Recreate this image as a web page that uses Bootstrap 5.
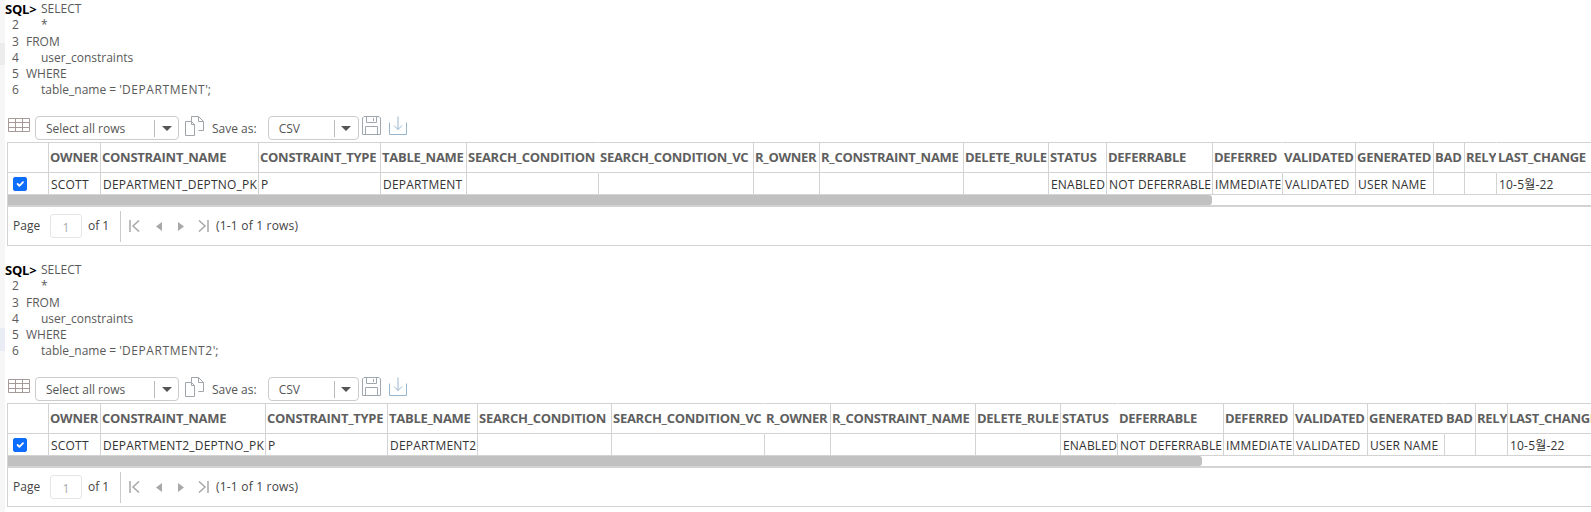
<!doctype html>
<html lang="ko">
<head>
<meta charset="utf-8">
<title>SQL constraints</title>
<link href="https://cdn.jsdelivr.net/npm/bootstrap@5.3.0/dist/css/bootstrap.min.css" rel="stylesheet">
<style>
html,body{height:512px;overflow:hidden;background:#fff}
body{font-family:"Open Sans","Noto Sans CJK KR",sans-serif;font-size:12px;color:#333}
.side-rail{flex:0 0 5px;background:#f6f6f6;height:512px}
.rail-mark{height:22px;background:#ececec;margin-top:43px}
.rail-mark-b{height:23px;background:#e9ebf5;margin-top:263px}
.sheet{flex:1 1 auto;min-width:0}
.result-block{height:261px}
.sql-lines{height:98px;padding-top:1px;line-height:16.3px;color:#5a5a5a}
.sql-row{display:flex;white-space:nowrap}
.sql-prompt{font-weight:700;color:#000;width:36px;font-size:13px;letter-spacing:-.2px}
.sql-num{width:21px;padding-left:7px}
.sql-ind{padding-left:15px}
.sql-caps{letter-spacing:.6px}
.tool-row{height:26px;margin-top:18px;padding-left:3px;color:#555}
.grid-ico{margin:2px 5px 0 0;display:block}
.drop-box{height:24px;border:1px solid #ccc;border-radius:4px;align-items:center;padding:1px 0 0 10px;color:#555}
.drop-a{width:144px}
.drop-b{width:91px}
.drop-sep{height:17px;border-left:1px solid #bbb;margin-left:auto;width:24px;display:flex;align-items:center;justify-content:center}
.drop-arrow{width:0;height:0;border-left:5px solid transparent;border-right:5px solid transparent;border-top:5px solid #555}
.copy-ico{margin:0 7px 0 6px;display:block}
.save-lbl{margin-right:11px;line-height:26px}
.save-ico{margin:0 5px 0 3px;display:block}
.grid-frame{margin-left:2px;width:1600px;border-left:1px solid #d3d3d3}
.grid-table{table-layout:fixed;border-collapse:separate;border-spacing:0;width:1600px;margin:0}
.grid-table th,.grid-table td{border:0;border-right:1px solid #d3d3d3;border-bottom:1px solid #d3d3d3;padding:0 2px;white-space:nowrap;overflow:hidden;background:#fff;vertical-align:middle;box-shadow:none}
.grid-table th{height:31px;padding-left:1px;padding-right:0;border-top:1px solid #d3d3d3;font-weight:700;font-size:13px;letter-spacing:-.27px;color:#5f5f5f}
.grid-table td{height:22px;padding-top:2px;color:#333;letter-spacing:.2px}
.grid-table th.no-rule{border-right-color:transparent}
.grid-table .check-cell{padding-left:5px;padding-top:0}
.grid-table .form-check-input{width:14px;height:14px;margin:1px 0 0;display:block;border-radius:2px;float:none}
.grid-one col:nth-child(1){width:41px}.grid-one col:nth-child(2){width:52px}.grid-one col:nth-child(3){width:158px}.grid-one col:nth-child(4){width:122px}.grid-one col:nth-child(5){width:86px}.grid-one col:nth-child(6){width:132px}.grid-one col:nth-child(7){width:155px}.grid-one col:nth-child(8){width:66px}.grid-one col:nth-child(9){width:144px}.grid-one col:nth-child(10){width:85px}.grid-one col:nth-child(11){width:58px}.grid-one col:nth-child(12){width:106px}.grid-one col:nth-child(13){width:70px}.grid-one col:nth-child(14){width:73px}.grid-one col:nth-child(15){width:78px}.grid-one col:nth-child(16){width:31px}.grid-one col:nth-child(17){width:32px}
.grid-two col:nth-child(1){width:41px}.grid-two col:nth-child(2){width:52px}.grid-two col:nth-child(3){width:165px}.grid-two col:nth-child(4){width:122px}.grid-two col:nth-child(5){width:90px}.grid-two col:nth-child(6){width:134px}.grid-two col:nth-child(7){width:153px}.grid-two col:nth-child(8){width:66px}.grid-two col:nth-child(9){width:145px}.grid-two col:nth-child(10){width:85px}.grid-two col:nth-child(11){width:57px}.grid-two col:nth-child(12){width:106px}.grid-two col:nth-child(13){width:70px}.grid-two col:nth-child(14){width:74px}.grid-two col:nth-child(15){width:77px}.grid-two col:nth-child(16){width:31px}.grid-two col:nth-child(17){width:32px}
.scroll-track{height:12px;border-bottom:2px solid #d3d3d3}
.scroll-thumb{height:10px;background:#c1c1c1;border-radius:0 3px 3px 0}
.thumb-one{width:1204px}
.thumb-two{width:1194px}
.pager-bar{height:39px;border-bottom:1px solid #d3d3d3;padding-left:5px;color:#444}
.page-lbl{width:37px}
.page-input{width:32px;height:24px;border:1px solid #e6e6e6;border-radius:3px;text-align:center;color:#aaa;line-height:26px;margin-right:6px}
.page-of{width:32px}
.pager-sep{height:31px;border-left:1px solid #ccc;margin-right:8px}
.pg-ico{display:block}
.pg-first{margin-right:16px}
.pg-prev{margin-right:16px}
.pg-next{margin-right:14px}
.pg-last{margin-right:7px}
.pg-count{letter-spacing:.2px}
</style>
</head>
<body class="d-flex">
<div class="side-rail"><div class="rail-mark"></div><div class="rail-mark-b"></div></div>
<main class="sheet">

<section class="result-block">
  <div class="sql-lines">
    <div class="sql-row"><span class="sql-prompt">SQL&gt;</span><span>SELECT</span></div>
    <div class="sql-row"><span class="sql-num">2</span><span class="sql-ind">*</span></div>
    <div class="sql-row"><span class="sql-num">3</span><span>FROM</span></div>
    <div class="sql-row"><span class="sql-num">4</span><span class="sql-ind">user_constraints</span></div>
    <div class="sql-row"><span class="sql-num">5</span><span>WHERE</span></div>
    <div class="sql-row"><span class="sql-num">6</span><span class="sql-ind">table_name = '<span class="sql-caps">DEPARTMENT</span>';</span></div>
  </div>
  <div class="tool-row d-flex align-items-start">
    <svg class="grid-ico" width="22" height="14" viewBox="0 0 22 14" fill="none" stroke="#a59a98"><path d="M.5.5h21v13H.5zM.5 4.500h21M.5 9.500h21M7.500.5v13M14.500.5v13"/></svg>
    <div class="drop-box drop-a d-flex">Select all rows<span class="drop-sep"><span class="drop-arrow"></span></span></div>
    <svg class="copy-ico" width="20" height="20" viewBox="0 0 20 20" fill="none" stroke="#9fa5aa"><path d="M.5 5.500h6l3 3v11H.5zM6.500 5.500v3h3M6.500 5V.5h7l5 5v9h-5M13.500.5v5h5"/></svg>
    <span class="save-lbl">Save as:</span>
    <div class="drop-box drop-b d-flex">CSV<span class="drop-sep"><span class="drop-arrow"></span></span></div>
    <svg class="save-ico" width="19" height="19" viewBox="0 0 19 19" fill="none" stroke="#9fa8b0"><path d="M2 .5h15l1.500 1.500v16.500H.5V2zM4.500.5v6h10v-6M11.500 2v3M3.500 18.500v-8h12v8"/></svg>
    <svg class="save-ico" width="18" height="19" viewBox="0 0 18 19" fill="none" stroke="#98b6ce"><path d="M.5 6.500v12h17v-12M9 .5v13M5 9.500l4 4 4-4"/></svg>
  </div>
  <div class="grid-frame">
    <table class="table grid-table grid-one">
      <colgroup><col><col><col><col><col><col><col><col><col><col><col><col><col><col><col><col><col><col></colgroup>
      <thead><tr><th></th><th>OWNER</th><th>CONSTRAINT_NAME</th><th>CONSTRAINT_TYPE</th><th>TABLE_NAME</th><th class="no-rule">SEARCH_CONDITION</th><th>SEARCH_CONDITION_VC</th><th>R_OWNER</th><th>R_CONSTRAINT_NAME</th><th>DELETE_RULE</th><th>STATUS</th><th>DEFERRABLE</th><th class="no-rule">DEFERRED</th><th>VALIDATED</th><th>GENERATED</th><th>BAD</th><th class="no-rule">RELY</th><th>LAST_CHANGE</th></tr></thead>
      <tbody><tr><td class="check-cell"><input class="form-check-input" type="checkbox" checked aria-label="row 1"></td><td>SCOTT</td><td>DEPARTMENT_DEPTNO_PK</td><td>P</td><td>DEPARTMENT</td><td></td><td></td><td></td><td></td><td></td><td>ENABLED</td><td>NOT DEFERRABLE</td><td>IMMEDIATE</td><td>VALIDATED</td><td>USER NAME</td><td></td><td></td><td>10-5월-22</td></tr></tbody>
    </table>
    <div class="scroll-track"><div class="scroll-thumb thumb-one"></div></div>
    <div class="pager-bar d-flex align-items-center">
      <span class="page-lbl">Page</span><span class="page-input">1</span><span class="page-of">of 1</span><span class="pager-sep"></span>
      <svg class="pg-ico pg-first" width="11" height="12" viewBox="0 0 11 12" fill="none" stroke="#a8a8a8" stroke-width="1.500"><path d="M1 0v12M10 .5 4 6l6 5.500"/></svg>
      <svg class="pg-ico pg-prev" width="6" height="9" viewBox="0 0 6 9" fill="#a8a8a8"><path d="M6 0v9L0 4.500z"/></svg>
      <svg class="pg-ico pg-next" width="6" height="9" viewBox="0 0 6 9" fill="#a8a8a8"><path d="M0 0v9l6-4.500z"/></svg>
      <svg class="pg-ico pg-last" width="11" height="12" viewBox="0 0 11 12" fill="none" stroke="#a8a8a8" stroke-width="1.500"><path d="M10 0v12M1 .5 7 6l-6 5.500"/></svg>
      <span class="pg-count">(1-1 of 1 rows)</span>
    </div>
  </div>
</section>

<section class="result-block">
  <div class="sql-lines">
    <div class="sql-row"><span class="sql-prompt">SQL&gt;</span><span>SELECT</span></div>
    <div class="sql-row"><span class="sql-num">2</span><span class="sql-ind">*</span></div>
    <div class="sql-row"><span class="sql-num">3</span><span>FROM</span></div>
    <div class="sql-row"><span class="sql-num">4</span><span class="sql-ind">user_constraints</span></div>
    <div class="sql-row"><span class="sql-num">5</span><span>WHERE</span></div>
    <div class="sql-row"><span class="sql-num">6</span><span class="sql-ind">table_name = '<span class="sql-caps">DEPARTMENT2</span>';</span></div>
  </div>
  <div class="tool-row d-flex align-items-start">
    <svg class="grid-ico" width="22" height="14" viewBox="0 0 22 14" fill="none" stroke="#a59a98"><path d="M.5.5h21v13H.5zM.5 4.500h21M.5 9.500h21M7.500.5v13M14.500.5v13"/></svg>
    <div class="drop-box drop-a d-flex">Select all rows<span class="drop-sep"><span class="drop-arrow"></span></span></div>
    <svg class="copy-ico" width="20" height="20" viewBox="0 0 20 20" fill="none" stroke="#9fa5aa"><path d="M.5 5.500h6l3 3v11H.5zM6.500 5.500v3h3M6.500 5V.5h7l5 5v9h-5M13.500.5v5h5"/></svg>
    <span class="save-lbl">Save as:</span>
    <div class="drop-box drop-b d-flex">CSV<span class="drop-sep"><span class="drop-arrow"></span></span></div>
    <svg class="save-ico" width="19" height="19" viewBox="0 0 19 19" fill="none" stroke="#9fa8b0"><path d="M2 .5h15l1.500 1.500v16.500H.5V2zM4.500.5v6h10v-6M11.500 2v3M3.500 18.500v-8h12v8"/></svg>
    <svg class="save-ico" width="18" height="19" viewBox="0 0 18 19" fill="none" stroke="#98b6ce"><path d="M.5 6.500v12h17v-12M9 .5v13M5 9.500l4 4 4-4"/></svg>
  </div>
  <div class="grid-frame">
    <table class="table grid-table grid-two">
      <colgroup><col><col><col><col><col><col><col><col><col><col><col><col><col><col><col><col><col><col></colgroup>
      <thead><tr><th></th><th>OWNER</th><th>CONSTRAINT_NAME</th><th>CONSTRAINT_TYPE</th><th>TABLE_NAME</th><th>SEARCH_CONDITION</th><th class="no-rule">SEARCH_CONDITION_VC</th><th>R_OWNER</th><th>R_CONSTRAINT_NAME</th><th>DELETE_RULE</th><th class="no-rule">STATUS</th><th>DEFERRABLE</th><th>DEFERRED</th><th>VALIDATED</th><th class="no-rule">GENERATED</th><th>BAD</th><th>RELY</th><th>LAST_CHANGE</th></tr></thead>
      <tbody><tr><td class="check-cell"><input class="form-check-input" type="checkbox" checked aria-label="row 1"></td><td>SCOTT</td><td>DEPARTMENT2_DEPTNO_PK</td><td>P</td><td>DEPARTMENT2</td><td></td><td></td><td></td><td></td><td></td><td>ENABLED</td><td>NOT DEFERRABLE</td><td>IMMEDIATE</td><td>VALIDATED</td><td>USER NAME</td><td></td><td></td><td>10-5월-22</td></tr></tbody>
    </table>
    <div class="scroll-track"><div class="scroll-thumb thumb-two"></div></div>
    <div class="pager-bar d-flex align-items-center">
      <span class="page-lbl">Page</span><span class="page-input">1</span><span class="page-of">of 1</span><span class="pager-sep"></span>
      <svg class="pg-ico pg-first" width="11" height="12" viewBox="0 0 11 12" fill="none" stroke="#a8a8a8" stroke-width="1.500"><path d="M1 0v12M10 .5 4 6l6 5.500"/></svg>
      <svg class="pg-ico pg-prev" width="6" height="9" viewBox="0 0 6 9" fill="#a8a8a8"><path d="M6 0v9L0 4.500z"/></svg>
      <svg class="pg-ico pg-next" width="6" height="9" viewBox="0 0 6 9" fill="#a8a8a8"><path d="M0 0v9l6-4.500z"/></svg>
      <svg class="pg-ico pg-last" width="11" height="12" viewBox="0 0 11 12" fill="none" stroke="#a8a8a8" stroke-width="1.500"><path d="M10 0v12M1 .5 7 6l-6 5.500"/></svg>
      <span class="pg-count">(1-1 of 1 rows)</span>
    </div>
  </div>
</section>

</main>
<script src="https://cdn.jsdelivr.net/npm/bootstrap@5.3.0/dist/js/bootstrap.bundle.min.js"></script>
</body>
</html>
